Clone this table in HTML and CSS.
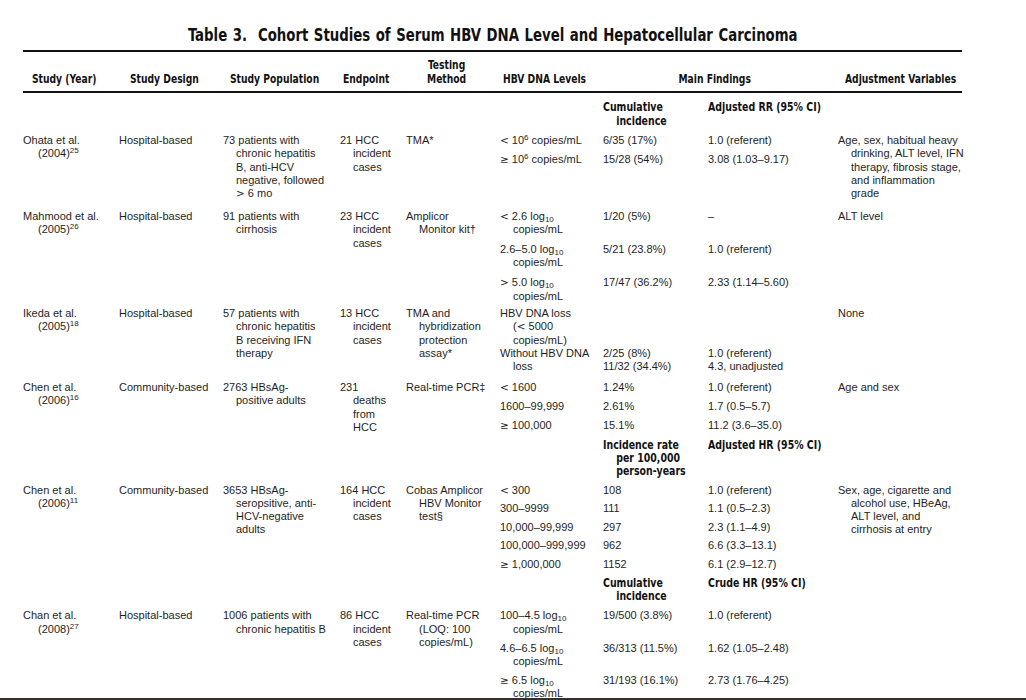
FILE: index.html
```html
<!DOCTYPE html>
<html lang="en">
<head>
<meta charset="utf-8">
<title>Table 3. Cohort Studies of Serum HBV DNA Level and Hepatocellular Carcinoma</title>
<link rel="stylesheet" href="styles.css">
</head>
<body>
<div class="page">
  <div class="table">
    <h1 class="title"><span class="sq-c">Table 3.&nbsp; Cohort Studies of Serum HBV DNA Level and Hepatocellular Carcinoma</span></h1>

    <div class="head">
      <div class="h h1"><span class="sq">Study (Year)</span></div>
      <div class="h h2"><span class="sq">Study Design</span></div>
      <div class="h h3"><span class="sq">Study Population</span></div>
      <div class="h h4"><span class="sq">Endpoint</span></div>
      <div class="h h5"><span class="sq mid">Testing<br>Method</span></div>
      <div class="h h6"><span class="sq">HBV DNA Levels</span></div>
      <div class="h h7"><span class="sq-c">Main Findings</span></div>
      <div class="h h9"><span class="sq">Adjustment Variables</span></div>
    </div>

    <div class="body">
      <div class="row subhead">
        <div class="cell c-cum">Cumulative<br>incidence</div>
        <div class="cell c-rr">Adjusted RR (95% CI)</div>
      </div>

      <div class="row gap-ohata">
        <div class="cell c1">Ohata et al.<br>(2004)<span class="sup">25</span></div>
        <div class="cell">Hospital-based</div>
        <div class="cell">73 patients with<br>chronic hepatitis<br>B, anti-HCV<br>negative, followed<br><span class="sym">&gt;</span> 6 mo</div>
        <div class="cell">21 HCC<br>incident<br>cases</div>
        <div class="cell">TMA*</div>
        <div class="levels">
          <div class="cell"><span class="sym">&lt;</span> 10<span class="sup">6</span> copies/mL</div>
          <div class="cell">6/35 (17%)</div>
          <div class="cell">1.0 (referent)</div>
          <div class="cell"><span class="sym">&ge;</span> 10<span class="sup">6</span> copies/mL</div>
          <div class="cell">15/28 (54%)</div>
          <div class="cell">3.08 (1.03–9.17)</div>
        </div>
        <div class="cell">Age, sex, habitual heavy<br>drinking, ALT level, IFN<br>therapy, fibrosis stage,<br>and inflammation<br>grade</div>
      </div>

      <div class="row gap-mahmood">
        <div class="cell c1">Mahmood et al.<br>(2005)<span class="sup">26</span></div>
        <div class="cell">Hospital-based</div>
        <div class="cell">91 patients with<br>cirrhosis</div>
        <div class="cell">23 HCC<br>incident<br>cases</div>
        <div class="cell">Amplicor<br>Monitor kit†</div>
        <div class="levels loose">
          <div class="cell"><span class="sym">&lt;</span> 2.6 log<span class="sub">10</span><br>copies/mL</div>
          <div class="cell">1/20 (5%)</div>
          <div class="cell">–</div>
          <div class="cell">2.6–5.0 log<span class="sub">10</span><br>copies/mL</div>
          <div class="cell">5/21 (23.8%)</div>
          <div class="cell">1.0 (referent)</div>
          <div class="cell"><span class="sym">&gt;</span> 5.0 log<span class="sub">10</span><br>copies/mL</div>
          <div class="cell">17/47 (36.2%)</div>
          <div class="cell">2.33 (1.14–5.60)</div>
        </div>
        <div class="cell">ALT level</div>
      </div>

      <div class="row gap-ikeda">
        <div class="cell c1">Ikeda et al.<br>(2005)<span class="sup">18</span></div>
        <div class="cell">Hospital-based</div>
        <div class="cell">57 patients with<br>chronic hepatitis<br>B receiving IFN<br>therapy</div>
        <div class="cell">13 HCC<br>incident<br>cases</div>
        <div class="cell">TMA and<br>hybridization<br>protection<br>assay*</div>
        <div class="levels tight">
          <div class="cell">HBV DNA loss<br>(<span class="sym">&lt;</span> 5000<br>copies/mL)</div>
          <div class="cell"></div>
          <div class="cell"></div>
          <div class="cell">Without HBV DNA<br>loss</div>
          <div class="cell flat">2/25 (8%)<br>11/32 (34.4%)</div>
          <div class="cell flat">1.0 (referent)<br>4.3, unadjusted</div>
        </div>
        <div class="cell">None</div>
      </div>

      <div class="row gap-chen16">
        <div class="cell c1">Chen et al.<br>(2006)<span class="sup">16</span></div>
        <div class="cell">Community-based</div>
        <div class="cell">2763 HBsAg-<br>positive adults</div>
        <div class="cell">231<br>deaths<br>from<br>HCC</div>
        <div class="cell">Real-time PCR‡</div>
        <div class="levels">
          <div class="cell"><span class="sym">&lt;</span> 1600</div>
          <div class="cell">1.24%</div>
          <div class="cell">1.0 (referent)</div>
          <div class="cell">1600–99,999</div>
          <div class="cell">2.61%</div>
          <div class="cell">1.7 (0.5–5.7)</div>
          <div class="cell"><span class="sym">&ge;</span> 100,000</div>
          <div class="cell">15.1%</div>
          <div class="cell">11.2 (3.6–35.0)</div>
        </div>
        <div class="cell">Age and sex</div>
      </div>

      <div class="row subhead gap-inc">
        <div class="cell c-cum">Incidence rate<br>per 100,000<br>person-years</div>
        <div class="cell c-rr">Adjusted HR (95% CI)</div>
      </div>

      <div class="row">
        <div class="cell c1">Chen et al.<br>(2006)<span class="sup">11</span></div>
        <div class="cell">Community-based</div>
        <div class="cell">3653 HBsAg-<br>seropsitive, anti-<br>HCV-negative<br>adults</div>
        <div class="cell">164 HCC<br>incident<br>cases</div>
        <div class="cell">Cobas Amplicor<br>HBV Monitor<br>test§</div>
        <div class="levels snug">
          <div class="cell"><span class="sym">&lt;</span> 300</div>
          <div class="cell">108</div>
          <div class="cell">1.0 (referent)</div>
          <div class="cell">300–9999</div>
          <div class="cell">111</div>
          <div class="cell">1.1 (0.5–2.3)</div>
          <div class="cell">10,000–99,999</div>
          <div class="cell">297</div>
          <div class="cell">2.3 (1.1–4.9)</div>
          <div class="cell">100,000–999,999</div>
          <div class="cell">962</div>
          <div class="cell">6.6 (3.3–13.1)</div>
          <div class="cell"><span class="sym">&ge;</span> 1,000,000</div>
          <div class="cell">1152</div>
          <div class="cell">6.1 (2.9–12.7)</div>
        </div>
        <div class="cell">Sex, age, cigarette and<br>alcohol use, HBeAg,<br>ALT level, and<br>cirrhosis at entry</div>
      </div>

      <div class="row subhead">
        <div class="cell c-cum">Cumulative<br>incidence</div>
        <div class="cell c-rr">Crude HR (95% CI)</div>
      </div>

      <div class="row">
        <div class="cell c1">Chan et al.<br>(2008)<span class="sup">27</span></div>
        <div class="cell">Hospital-based</div>
        <div class="cell">1006 patients with<br>chronic hepatitis B</div>
        <div class="cell">86 HCC<br>incident<br>cases</div>
        <div class="cell">Real-time PCR<br>(LOQ: 100<br>copies/mL)</div>
        <div class="levels">
          <div class="cell">100–4.5 log<span class="sub">10</span><br>copies/mL</div>
          <div class="cell">19/500 (3.8%)</div>
          <div class="cell">1.0 (referent)</div>
          <div class="cell">4.6–6.5 log<span class="sub">10</span><br>copies/mL</div>
          <div class="cell">36/313 (11.5%)</div>
          <div class="cell">1.62 (1.05–2.48)</div>
          <div class="cell"><span class="sym">&ge;</span> 6.5 log<span class="sub">10</span><br>copies/mL</div>
          <div class="cell">31/193 (16.1%)</div>
          <div class="cell">2.73 (1.76–4.25)</div>
        </div>
        <div class="cell"></div>
      </div>
    </div>
  </div>
</div>
</body>
</html>
```
FILE: styles.css
```css
* { box-sizing: border-box; }

html, body {
  margin: 0;
  padding: 0;
  background: #ffffff;
}

body {
  font-family: "Liberation Sans", Arial, sans-serif;
  font-size: 11px;
  color: #1e1e1e;
}

.page {
  height: 700px;
  overflow: hidden;
  border-bottom: 2px solid #34302f;
}

.table {
  width: 939px;
  margin-left: 23px;
  padding-top: 25px;
}

.title {
  margin: 0 0 5px;
  font-family: "DejaVu Sans Condensed", "DejaVu Sans", sans-serif;
  font-stretch: condensed;
  font-weight: bold;
  font-size: 17.5px;
  line-height: 20px;
  word-spacing: 1px;
  text-align: center;
  color: #111;
  white-space: nowrap;
}

.title .sq-c {
  transform: scaleX(0.845);
}

.sq,
.sq-c {
  display: inline-block;
  transform: scaleX(0.83);
  transform-origin: left center;
}

.sq-c {
  transform-origin: center center;
}

.sq.mid {
  text-align: center;
}

.head,
.row {
  display: grid;
  grid-template-columns: 96px 104px 117px 66px 94px 103px 105px 130px 124px;
}

.head {
  height: 43px;
  border-top: 2px solid #111;
  border-bottom: 2px solid #111;
  align-items: end;
  padding-bottom: 5px;
  font-family: "DejaVu Sans Condensed", "DejaVu Sans", sans-serif;
  font-stretch: condensed;
  font-weight: bold;
  font-size: 12.3px;
  line-height: 14px;
  color: #111;
  white-space: nowrap;
}

.h1 { padding-left: 9px; }
.h2 { padding-left: 11px; }
.h3 { padding-left: 7px; }
.h4 { padding-left: 3px; }
.h5 { padding-left: 21px; }
.h6 { padding-left: 3px; }
.h7 { grid-column: 7 / span 2; text-align: center; padding-right: 12px; }
.h9 { padding-left: 7px; }

.body {
  padding-top: 8.4px;
}

.row {
  line-height: 13.3px;
  padding-bottom: 6px;
}

.cell {
  white-space: nowrap;
  padding-left: 13px;
  text-indent: -13px;
}

.c1 {
  padding-left: 15px;
  text-indent: -15px;
}

.flat {
  padding-left: 0;
  text-indent: 0;
}

.subhead {
  font-family: "DejaVu Sans Condensed", "DejaVu Sans", sans-serif;
  font-stretch: condensed;
  font-weight: bold;
  font-size: 12.3px;
  color: #111;
}

.subhead .cell {
  padding-left: 15.5px;
  text-indent: -15.5px;
  transform: scaleX(0.85);
  transform-origin: left center;
}

.c-cum { grid-column: 7; }
.c-rr { grid-column: 8; }

.levels {
  grid-column: 6 / span 3;
  align-self: start;
  align-content: start;
  display: grid;
  grid-template-columns: 103px 105px 130px;
  row-gap: 5.6px;
}

.levels.loose { row-gap: 6.6px; }
.levels.snug { row-gap: 5.2px; }
.levels.tight { row-gap: 0; }

.gap-ohata { padding-bottom: 9.5px; }
.gap-mahmood { padding-bottom: 4px; }
.gap-ikeda { padding-bottom: 7.5px; }
.gap-chen16 { padding-bottom: 4.6px; }
.gap-inc { padding-bottom: 5px; }

.sym {
  font-family: "DejaVu Sans", sans-serif;
  font-size: 10.5px;
}

.sup {
  font-size: 8px;
  line-height: 0;
  vertical-align: 4px;
}

.sub {
  font-size: 8px;
  line-height: 0;
  vertical-align: -2px;
}
```
